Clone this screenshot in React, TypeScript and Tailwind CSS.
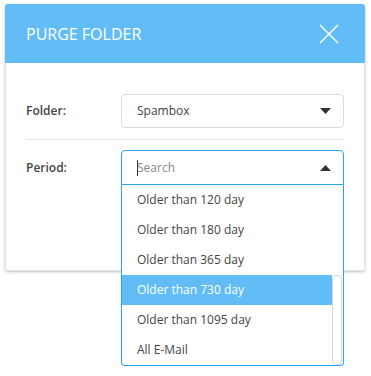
import React from "react";

const options = [
  "Older than 120 day",
  "Older than 180 day",
  "Older than 365 day",
  "Older than 730 day",
  "Older than 1095 day",
  "All E-Mail",
];

function Caret({ up }: { up?: boolean }) {
  return (
    <svg width="11" height="6" viewBox="0 0 11 6" className="shrink-0">
      {up ? (
        <path d="M0 6 L5.5 0 L11 6 Z" fill="#333" />
      ) : (
        <path d="M0 0 L11 0 L5.5 6 Z" fill="#333" />
      )}
    </svg>
  );
}

export default function App() {
  return (
    <div
      className="w-[371px] h-[376px] bg-white relative overflow-hidden"
      style={{ fontFamily: '"Open Sans", "Noto Sans", sans-serif' }}
    >
      <div className="ml-[5px] mt-[4px] w-[360px] rounded-[3px] bg-white shadow-[0_1px_3px_rgba(0,0,0,0.25)]">
        <div className="h-[59px] bg-[#62bdf6] rounded-t-[3px] flex items-center justify-between pl-[21px] pr-[26px]">
          <span className="text-white text-[16px]">PURGE FOLDER</span>
          <svg width="20" height="20" viewBox="0 0 20 20">
            <path d="M1 1 L19 19 M19 1 L1 19" stroke="#fff" strokeWidth="1.4" />
          </svg>
        </div>
        <div className="border-x border-b border-[#e3e3e3] px-[20px] pt-[31px] pb-[85px]">
          <div className="flex items-center">
            <div className="w-[95px] text-[12px] font-semibold text-[#444]">Folder:</div>
            <div className="flex-1 h-[34px] border border-[#dcdcdc] rounded-[4px] flex items-center justify-between pl-[15px] pr-[12px]">
              <span className="text-[12px] text-[#444]">Spambox</span>
              <Caret />
            </div>
          </div>
          <div className="h-px bg-[#e8e8e8] mt-[11px]" />
          <div className="flex items-center mt-[10px]">
            <div className="w-[95px] text-[12px] font-semibold text-[#444]">Period:</div>
            <div className="flex-1 relative">
              <div className="h-[35px] border border-[#2ea3f2] rounded-t-[4px] flex items-center justify-between pl-[15px] pr-[12px]">
                <span className="flex items-center text-[12px] text-[#888]">
                  <span className="w-px h-[16px] bg-[#333] mr-[-1px]" />
                  Search
                </span>
                <Caret up />
              </div>
              <div className="absolute left-0 right-0 top-[35px] border-x border-b border-[#2ea3f2] rounded-b-[4px] bg-white z-10">
                <div className="relative">
                  {options.map((o, i) => (
                    <div
                      key={o}
                      className={
                        "h-[30px] flex items-center pl-[15px] text-[12px] mr-[11px] " +
                        (i === 3 ? "bg-[#62bdf6] text-white" : "text-[#444]")
                      }
                    >
                      {o}
                    </div>
                  ))}
                  <div className="absolute right-[1px] top-[90px] bottom-[0px] w-[10px] rounded-[4px] border border-[#d8d8d8] bg-white" />
                </div>
              </div>
            </div>
          </div>
        </div>
      </div>
    </div>
  );
}
